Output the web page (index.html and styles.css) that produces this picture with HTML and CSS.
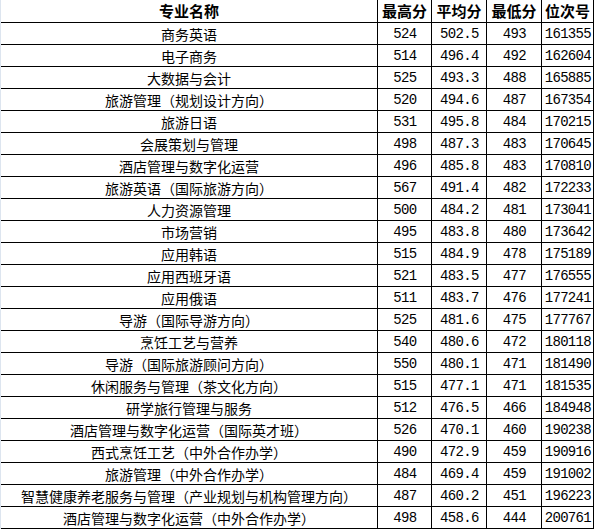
FILE: index.html
```html
<!DOCTYPE html>
<html lang="zh">
<head>
<meta charset="utf-8">
<title>分数表</title>
<link rel="stylesheet" href="styles.css">
</head>
<body>
<table class="scores">
<colgroup>
<col class="c-name"><col class="c-num"><col class="c-avg"><col class="c-min"><col class="c-rank">
</colgroup>
<thead>
<tr><th>专业名称</th><th>最高分</th><th>平均分</th><th>最低分</th><th>位次号</th></tr>
</thead>
<tbody>
<tr><td class="name">商务英语</td><td>524</td><td>502.5</td><td>493</td><td>161355</td></tr>
<tr><td class="name">电子商务</td><td>514</td><td>496.4</td><td>492</td><td>162604</td></tr>
<tr><td class="name">大数据与会计</td><td>525</td><td>493.3</td><td>488</td><td>165885</td></tr>
<tr><td class="name">旅游管理（规划设计方向）</td><td>520</td><td>494.6</td><td>487</td><td>167354</td></tr>
<tr><td class="name">旅游日语</td><td>531</td><td>495.8</td><td>484</td><td>170215</td></tr>
<tr><td class="name">会展策划与管理</td><td>498</td><td>487.3</td><td>483</td><td>170645</td></tr>
<tr><td class="name">酒店管理与数字化运营</td><td>496</td><td>485.8</td><td>483</td><td>170810</td></tr>
<tr><td class="name">旅游英语（国际旅游方向）</td><td>567</td><td>491.4</td><td>482</td><td>172233</td></tr>
<tr><td class="name">人力资源管理</td><td>500</td><td>484.2</td><td>481</td><td>173041</td></tr>
<tr><td class="name">市场营销</td><td>495</td><td>483.8</td><td>480</td><td>173642</td></tr>
<tr><td class="name">应用韩语</td><td>515</td><td>484.9</td><td>478</td><td>175189</td></tr>
<tr><td class="name">应用西班牙语</td><td>521</td><td>483.5</td><td>477</td><td>176555</td></tr>
<tr><td class="name">应用俄语</td><td>511</td><td>483.7</td><td>476</td><td>177241</td></tr>
<tr><td class="name">导游（国际导游方向）</td><td>525</td><td>481.6</td><td>475</td><td>177767</td></tr>
<tr><td class="name">烹饪工艺与营养</td><td>540</td><td>480.6</td><td>472</td><td>180118</td></tr>
<tr><td class="name">导游（国际旅游顾问方向）</td><td>550</td><td>480.1</td><td>471</td><td>181490</td></tr>
<tr><td class="name">休闲服务与管理（茶文化方向）</td><td>515</td><td>477.1</td><td>471</td><td>181535</td></tr>
<tr><td class="name">研学旅行管理与服务</td><td>512</td><td>476.5</td><td>466</td><td>184948</td></tr>
<tr><td class="name">酒店管理与数字化运营（国际英才班）</td><td>526</td><td>470.1</td><td>460</td><td>190238</td></tr>
<tr><td class="name">西式烹饪工艺（中外合作办学）</td><td>490</td><td>472.9</td><td>459</td><td>190916</td></tr>
<tr><td class="name">旅游管理（中外合作办学）</td><td>484</td><td>469.4</td><td>459</td><td>191002</td></tr>
<tr><td class="name">智慧健康养老服务与管理（产业规划与机构管理方向）</td><td>487</td><td>460.2</td><td>451</td><td>196223</td></tr>
<tr><td class="name">酒店管理与数字化运营（中外合作办学）</td><td>498</td><td>458.6</td><td>444</td><td>200761</td></tr>
</tbody>
</table>
</body>
</html>
```

FILE: styles.css
```css
html, body {
  margin: 0;
  padding: 0;
  background: #dde5ef;
}

.scores {
  margin-left: 1px;
  border-collapse: separate;
  border-spacing: 0;
  table-layout: fixed;
  width: 593px;
  background: #fff;
}

.c-name { width: 377px; }
.c-num { width: 54px; }
.c-avg { width: 55px; }
.c-min { width: 55px; }
.c-rank { width: 52px; }

.scores th,
.scores td {
  box-sizing: border-box;
  padding: 0;
  text-align: center;
  white-space: nowrap;
  overflow: hidden;
  border-right: 1px solid #000;
  border-bottom: 1px solid #000;
  color: #000;
  vertical-align: middle;
}

.scores th {
  height: 23px;
  font-family: "Noto Sans CJK SC", sans-serif;
  font-weight: 700;
  font-size: 15px;
  line-height: 22px;
}

.scores td {
  height: 22px;
  font-family: "Liberation Mono", monospace;
  font-size: 14px;
  letter-spacing: -0.7px;
  text-indent: 0.7px;
  padding-top: 1px;
  line-height: 20px;
}

.scores td.name {
  font-family: "Noto Sans CJK SC", sans-serif;
  font-size: 14px;
  letter-spacing: 0;
  text-indent: 0;
}
```
